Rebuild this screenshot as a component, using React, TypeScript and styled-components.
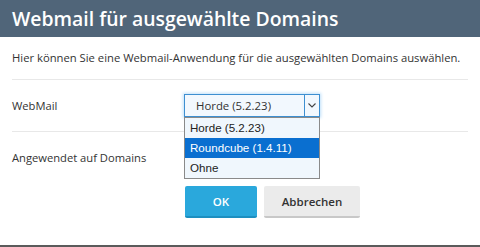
import React from 'react'
import styled, { createGlobalStyle } from 'styled-components'

const Global = createGlobalStyle`
  html, body {
    margin: 0;
    padding: 0;
    background: #fff;
  }
  body {
    font-family: 'Open Sans', 'Liberation Sans', sans-serif;
    color: #333;
  }
`

const Dialog = styled.div`
  width: 480px;
  height: 247px;
  box-sizing: border-box;
  border-bottom: 2px solid #5b5b5b;
  background: #fff;
  display: flex;
  flex-direction: column;
`

const Header = styled.header`
  height: 37px;
  background: #506579;
  color: #fff;
  font-size: 19.4px;
  font-weight: 600;
  display: flex;
  align-items: center;
  padding: 0 12px 1px;
  box-sizing: border-box;
`

const Body = styled.div`
  padding: 0 12px;
`

const Intro = styled.p`
  margin: 0;
  font-size: 11.25px;
  line-height: 42px;
  white-space: nowrap;
  border-bottom: 1px solid #e8e8e8;
`

const Row = styled.div<{ last?: boolean }>`
  display: grid;
  grid-template-columns: 172px 1fr;
  align-items: center;
  height: 51px;
  font-size: 11.2px;
  border-bottom: ${({ last }) => (last ? 'none' : '1px solid #e8e8e8')};
`

const SelectWrap = styled.div`
  position: relative;
  width: 136px;
`

const Select = styled.div`
  height: 23px;
  box-sizing: border-box;
  border: 1px solid #3d8fd1;
  box-shadow: 0 0 3px 1px #bfe0fa;
  background: #f2f8fe;
  display: flex;
  align-items: center;
  font-size: 11.4px;
  color: #333;
`

const Value = styled.span`
  flex: 1;
  padding-left: 11px;
`

const Arrow = styled.span`
  width: 14px;
  height: 21px;
  border-left: 1px solid #3d8fd1;
  display: flex;
  align-items: center;
  justify-content: center;
`

const List = styled.ul`
  position: absolute;
  top: 23px;
  left: 0;
  width: 134px;
  margin: 0;
  padding: 0;
  list-style: none;
  border: 1px solid #8a8a8a;
  background: #f0f7fd;
  font-family: 'Liberation Sans', Arial, sans-serif;
  font-size: 11.6px;
  z-index: 2;
`

const Option = styled.li<{ active?: boolean }>`
  height: 20px;
  line-height: 20px;
  padding-left: 5px;
  background: ${({ active }) => (active ? '#0a6fd0' : 'transparent')};
  color: ${({ active }) => (active ? '#fff' : '#222')};
`

const Buttons = styled.div`
  display: flex;
  gap: 7px;
  padding-left: 185px;
  margin-top: 3px;
`

const Button = styled.button<{ primary?: boolean }>`
  height: 32px;
  border: none;
  border-bottom: 2px solid ${({ primary }) => (primary ? '#1d8fc0' : '#c8c8c8')};
  border-radius: 2px;
  font-family: 'Open Sans', sans-serif;
  font-size: 11.5px;
  font-weight: 600;
  padding: 0;
  width: ${({ primary }) => (primary ? '72px' : '96px')};
  background: ${({ primary }) => (primary ? '#2aa8dc' : '#ebebeb')};
  color: ${({ primary }) => (primary ? '#fff' : '#333')};
`

const options = ['Horde (5.2.23)', 'Roundcube (1.4.11)', 'Ohne']

export default function App() {
  return (
    <>
      <Global />
      <Dialog>
        <Header>Webmail für ausgewählte Domains</Header>
        <Body>
          <Intro>Hier können Sie eine Webmail-Anwendung für die ausgewählten Domains auswählen.</Intro>
          <Row>
            <span>WebMail</span>
            <SelectWrap>
              <Select>
                <Value>Horde (5.2.23)</Value>
                <Arrow>
                  <svg width="8" height="5" viewBox="0 0 8 5">
                    <path d="M0.5 0.5 L4 4 L7.5 0.5" fill="none" stroke="#444" strokeWidth="1.1" />
                  </svg>
                </Arrow>
              </Select>
              <List>
                {options.map((o, i) => (
                  <Option key={o} active={i === 1}>
                    {o}
                  </Option>
                ))}
              </List>
            </SelectWrap>
          </Row>
          <Row last>
            <span>Angewendet auf Domains</span>
            <span />
          </Row>
        </Body>
        <Buttons>
          <Button primary>OK</Button>
          <Button>Abbrechen</Button>
        </Buttons>
      </Dialog>
    </>
  )
}
